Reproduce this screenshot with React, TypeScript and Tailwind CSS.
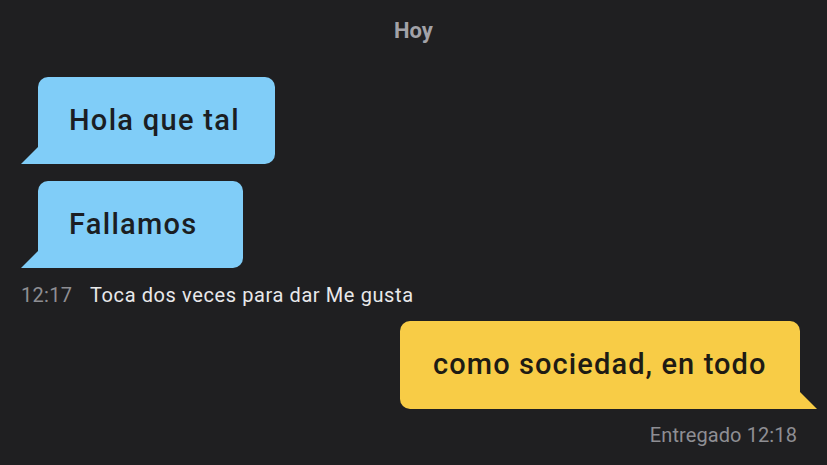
import React from "react";

function Tail({ side, color }: { side: "left" | "right"; color: string }) {
  if (side === "left") {
    return (
      <svg
        className="absolute bottom-0 left-[-17px]"
        width="17"
        height="17"
        viewBox="0 0 17 17"
      >
        <polygon points="0,17 17,0 17,17" fill={color} />
      </svg>
    );
  }
  return (
    <svg
      className="absolute bottom-0 right-[-17px]"
      width="17"
      height="17"
      viewBox="0 0 17 17"
    >
      <polygon points="0,0 17,17 0,17" fill={color} />
    </svg>
  );
}

export default function App() {
  const font = { fontFamily: "Roboto, 'Liberation Sans', sans-serif" };
  return (
    <div
      className="w-[827px] h-[465px] bg-[#1f1f21] overflow-hidden flex flex-col"
      style={font}
    >
      <div className="pt-[16px] h-[45px] text-center text-[22px] leading-[29px] font-bold text-[#a2a2a8]">
        Hoy
      </div>

      <div className="flex flex-col pl-[21px] pr-[10px]">
        <div className="mt-[32px] ml-[17px] relative w-[237px] h-[87px] bg-[#80cdf8] rounded-[10px] rounded-bl-none flex items-center pl-[31px]">
          <span className="text-[29px] font-medium tracking-[1.3px] text-[#1b1e23]">
            Hola que tal
          </span>
          <Tail side="left" color="#80cdf8" />
        </div>

        <div className="mt-[17px] ml-[17px] relative w-[205px] h-[87px] bg-[#80cdf8] rounded-[10px] rounded-bl-none flex items-center pl-[31px]">
          <span className="text-[29px] font-medium tracking-[1.3px] text-[#1b1e23]">
            Fallamos
          </span>
          <Tail side="left" color="#80cdf8" />
        </div>

        <div className="mt-[15px] flex items-center text-[20px] leading-[24px]">
          <span className="text-[#8e8e93] w-[69px] tracking-[0.3px]">12:17</span>
          <span className="text-[#e8e8ea] tracking-[0.6px]">
            Toca dos veces para dar Me gusta
          </span>
        </div>

        <div className="mt-[14px] self-end mr-[17px] relative w-[400px] h-[88px] bg-[#f8cc46] rounded-[10px] rounded-br-none flex items-center pl-[33px]">
          <span className="text-[29px] font-medium tracking-[1.1px] text-[#1e1b14]">
            como sociedad, en todo
          </span>
          <Tail side="right" color="#f8cc46" />
        </div>

        <div className="mt-[14px] self-end mr-[20px] text-[20px] leading-[24px] tracking-[0.1px] text-[#8e8e93]">
          Entregado 12:18
        </div>
      </div>
    </div>
  );
}
